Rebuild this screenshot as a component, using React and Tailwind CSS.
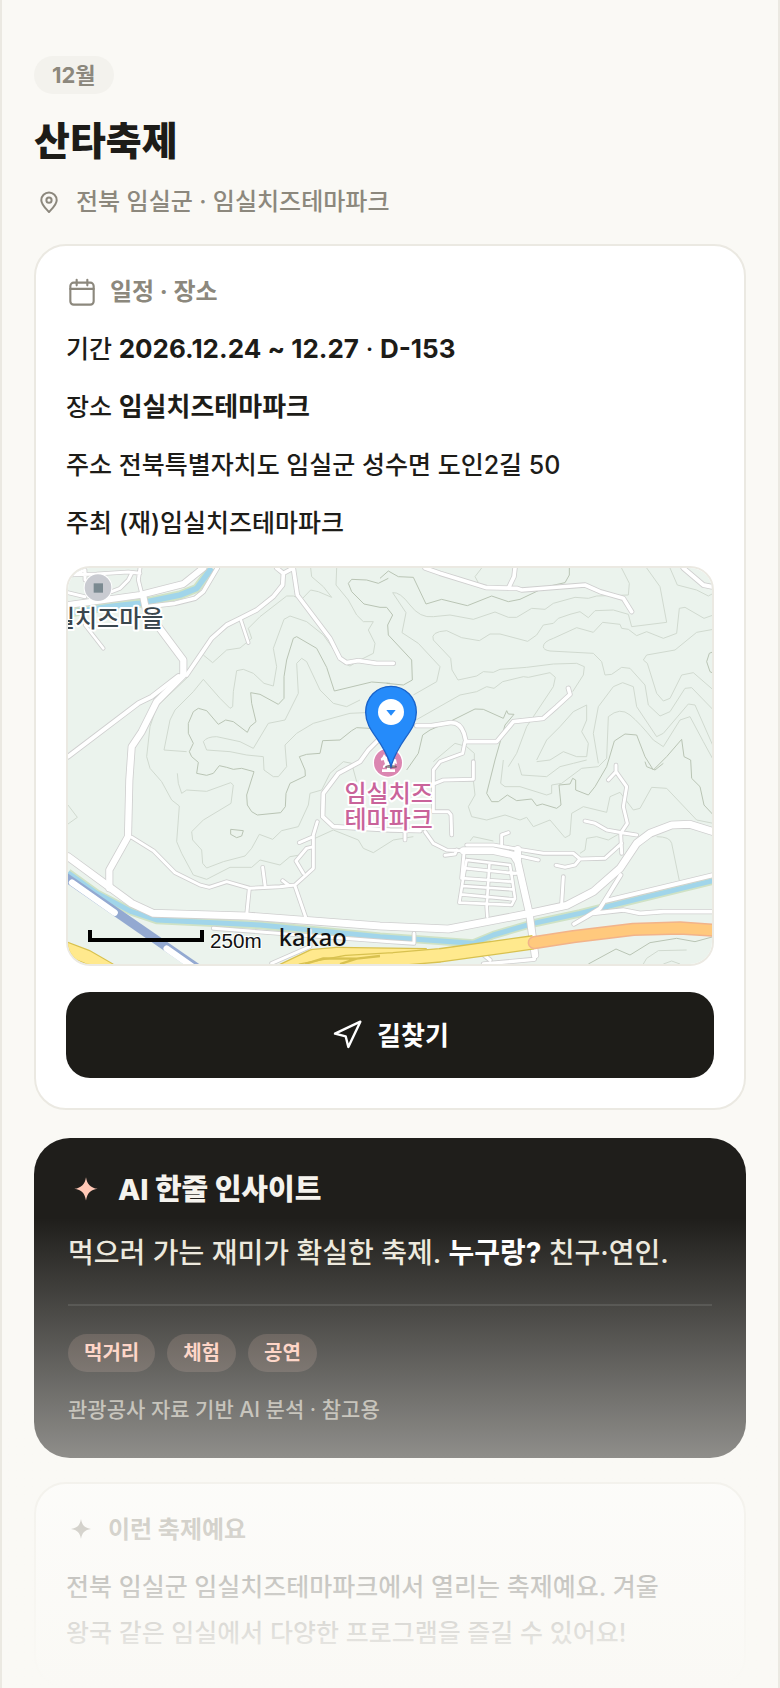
import { Navigation } from 'lucide-react';

const festival = {
  month: '12월',
  name: '산타축제',
  region: '전북 임실군 · 임실치즈테마파크',
  start: '2026.12.24 ~ 12.27',
  dday: 'D-153',
  place: '임실치즈테마파크',
  address: '전북특별자치도 임실군 성수면 도인2길 50',
  host: '(재)임실치즈테마파크',
  tags: ['먹거리', '체험', '공연'],
};

// contour lines, light and dark, drawn under the roads
const contours = [
  'M430 285L458 308L500 270L540 264L575 235L565 205L600 170L680 108L700 108L725 118L752 90L775 95L815 112',
  'M752 24L755 50L790 80L815 112',
  'M830 24L828 75L865 120L890 165L910 185L940 185L925 210L945 250L940 280L900 300L870 318L850 310L815 260L790 225L740 185L690 168L672 178L640 265L650 320L640 378L612 370L580 340L550 328L530 332L520 395L518 440L510 445L480 415L430 358L400 395L345 450L330 480L312 570L380 575',
  'M352 640L355 670L365 700L380 690L440 694L512 668L520 675L513 730L430 780L395 815L398 840L425 870L428 910L440 924L490 905L555 888L575 865L598 823L638 838L665 812L715 800L745 735L750 700L785 690L810 640L850 605L875 610L890 665',
  'M430 545Q440 530 470 530L540 545L580 565L625 490L675 480L715 400L710 310L725 295L740 305L780 390L820 430L860 440L900 420',
  'M430 545L440 570L510 575L560 585L610 590L612 630L640 650L655 650L680 620L675 555L710 520L760 490L870 460L915 458',
  'M385 350L290 440L270 500L260 590L270 625L305 665L335 720L358 738L350 845L365 880L400 945L440 958L510 922L575 922L600 900L660 915L690 890L720 885',
  'M24 735L52 772L24 792',
  'M765 835L820 810L895 840L910 865L940 878L1000 840L1060 830',
];

const contoursRight = [
  'M38 98Q60 95 90 135T160 170L210 165L280 178L345 156L385 172L410 172L455 145L495 148L520 130L585 112L625 115L650 108L745 105L748 70L720 15',
  'M38 98L78 158L66 218L115 250L180 320L170 365L100 405',
  'M160 240Q150 215 200 212L245 233L298 242L330 222L360 222L443 244L470 225L490 195L520 190L535 175L570 163L600 155L625 173L645 152L700 150L745 163L755 200L860 187L840 80L800 24',
  'M160 240L212 295L216 330L234 360L290 348L310 335L340 337L360 328L440 322L520 312L590 310L613 320L610 345L578 395',
  'M490 260Q490 245 520 235L590 203L640 217L668 187L720 193L725 205L745 208L770 227L800 215L850 235L890 220L898 145L915 142L972 175L1000 165',
  'M490 260Q490 270 510 273L640 280L665 305L675 345L695 343L725 322L750 325L795 375L805 435L840 468L870 455L915 385L935 383L1000 450',
  'M1000 208L950 217L885 270L800 285L790 300L802 310L830 400L850 423L870 415L905 345L940 338L1000 390',
  'M108 480L240 405L290 395L320 380L342 385L368 365L430 350L445 352L510 338L526 352L520 380L440 500L410 580L385 620',
  'M655 610L640 520L655 440L700 380L728 368L760 380L770 440L830 530L850 520L925 432L945 435L1000 560',
  'M470 600L500 540L540 500L580 455L620 435L620 480L605 515L625 550L620 590L590 590L550 575L510 600L470 605',
  'M685 470Q720 440 750 465T820 540L850 560L900 480L930 470L970 545L1000 600',
  'M285 50L305 24M285 50L295 68M870 24L892 75L950 90L985 108L1000 100',
  'M370 600L362 670L375 680L420 680L500 705L515 700L515 675L545 670L605 625L655 620L680 595L685 470',
  'M415 610L425 645L500 650L540 620L580 610L620 600',
  'M280 660L285 705L265 740L275 770L320 780L375 765L420 780L440 772L460 800L510 780L555 833L570 825L575 760L610 740L680 757L690 710L720 697L760 750L780 745L815 682L860 685L950 780L1000 790',
  'M270 843L280 830L340 843M600 880L615 870L620 835L650 830L685 840L720 820M830 830Q870 830 875 850L898 962',
  'M160 605L225 550L260 560L283 580L283 640',
  'M790 1212L800 1195L835 1172L920 1170M850 1212L875 1203L900 1212',
];

const darkContours = [
  'M990 370L935 366L823 393L800 322L770 265L710 230L700 235L680 300L672 350L672 415L655 433L600 403L572 398L575 430L588 485L570 500L562 517L520 485L497 480L475 493L440 452L415 445L400 455L385 490L385 520L400 550L388 575L395 590L415 607L410 640L440 646L460 640L478 617L500 622L520 628L545 625L582 635L560 705L562 735L575 755L592 765L662 758L676 740L678 700L690 670L736 648L735 630L718 590L740 583L780 580L788 542L840 540L875 512L890 503L930 505',
  'M985 55L955 70L920 60L875 58L865 70L875 95L912 132L960 142L980 142L998 165L983 195L985 225L1055 300L1057 360L1030 375L980 370',
  'M512 808L550 812L545 828L530 833L512 823Z',
];

const darkContoursRight = [
  'M0 55L25 33L55 50L100 52L138 132L185 118L262 137L335 108L385 125L420 118L500 80L555 68L568 45L568 24',
  'M80 630L115 580L128 525L150 510L215 482L285 447L310 448L370 475L380 452L385 462L402 463L375 495L345 600L320 700L335 725L355 725L382 705L410 722L455 717L470 737L487 732L530 745L543 735L537 675L570 672L578 655L587 660L587 690L625 705L645 680L680 620L703 543L735 522L770 525L795 590L820 630L860 590L905 538L912 590L932 600L935 655L960 680L972 735L1000 765',
  'M1000 275L988 280L980 305L990 335L1000 340M795 605L800 620L825 630L850 610',
  'M625 1212L708 1167L750 1185L810 1148L890 1135L945 1145L1000 1130',
];

// [path, width]
const roads = [
  ['M24 590L235 430L275 410L355 348', 12],
  ['M24 98L75 110M24 50L75 30L75 60M24 45L110 42L205 36L240 40M215 40L205 60L180 85L155 95M240 24L235 60L250 120', 9],
  ['M24 135L240 105L370 72L430 24', 18],
  ['M250 120L262 140L345 130L405 115L430 95L472 24', 11],
  ['M250 110L258 150L370 300L370 345L290 425L245 515L215 560L208 660L204 830L148 930L148 985', 19],
  ['M380 345L455 235L500 195L540 175L590 150L640 110L668 75L670 40L650 24M670 40L700 24L712 105L810 235L840 295L860 308L895 302L950 310L1000 310', 11],
  ['M542 178L565 248M75 195L130 265', 8],
  ['M215 832L280 872L345 938L420 975L448 982L500 965L570 985L660 980L705 975L760 925L760 825L772 785M718 848L760 830M760 860L740 865L708 903L730 940M608 922L615 975M668 962L685 975M568 985L560 1065M705 978L740 1080', 9],
  ['M24 890L215 1030L280 1060L560 1068L960 1098L1165 1107L1400 1062L1520 1036L1600 995L1680 925L1730 850L1770 820L1835 795L1890 793L1960 815', 21],
  ['M460 1105L720 1125L990 1145L1062 1150L1062 1120M750 1110L750 1160L635 1210', 9],
  ['M955 540L925 570L900 605L835 640L790 700L788 770L820 800L990 810L1080 812', 11],
  ['M1095 815L1120 850L1160 870L1210 872M1035 815L1035 840M1155 886L1185 882L1190 870', 9],
  ['M1070 497L1115 497L1170 488Q1200 485 1212 520L1218 545L1310 545L1360 485L1450 475L1490 440L1530 403L1525 385', 11],
  ['M1215 545L1208 580L1140 605L1120 630L1120 755L1165 755L1173 765L1175 825M1120 672L1150 660L1240 658L1240 605', 9],
  ['M1095 24L1140 40L1280 83L1370 85L1385 90L1575 75L1620 95L1690 115L1715 155M1345 85L1362 50L1365 24', 11],
  ['M1870 24L1930 75L1955 80', 12],
  ['M1668 615L1668 635L1700 680L1690 740L1702 790L1682 820L1685 880M1668 635L1645 660M1575 783L1605 790L1640 810L1685 818L1730 825M1685 850L1635 895L1560 897L1540 880L1450 880L1370 867L1300 855L1220 855M1560 897L1545 915L1515 922L1488 916', 9],
  ['M1325 853L1325 825L1345 818M1510 950L1505 1030M1380 888L1435 900M1212 880L1205 955M1350 938L1370 940', 9],
  ['M1220 900L1350 915L1365 1015L1355 1035L1198 1028L1212 940L1220 900M1220 925L1365 940M1215 955L1355 965M1208 978L1355 988M1203 1003L1360 1018M1288 915L1280 1040L1282 1070', 8],
  ['M1210 872L1300 872L1360 885L1373 905L1408 1060L1425 1185M1373 868L1373 900', 20],
  ['M1682 945L1620 1045L1580 1070L1542 1092M1600 1060L1690 1050L1740 1060L1810 1055L1960 1055', 11],
  ['M1640 1022L1960 945', 12],
  ['M1423 1150L1423 1198L1270 1212M1272 1185L1290 1200', 10],
];

const rivers = [
  ['M24 160L80 150L150 140L240 130L360 105L410 85L455 24', 17],
  ['M24 938L110 1000L215 1055L290 1080L600 1095L960 1130L1240 1150L1300 1125L1420 1090L1560 1060L1680 1030L1960 962', 15],
];

function FestivalMap() {
  return (
    <svg
      viewBox="24 24 1932 1188"
      className="block w-full"
      role="img"
      aria-label="임실치즈테마파크 지도"
    >
      <rect x="0" y="0" width="1980" height="1240" fill="#ebf3ed" />

      <g fill="none" strokeLinejoin="round" strokeWidth="3">
        <g stroke="#d0d9cf">
          {contours.map((d) => <path key={d} d={d} />)}
        </g>
        <g stroke="#b9c4b4">
          {darkContours.map((d) => <path key={d} d={d} />)}
        </g>
        <g stroke="#d0d9cf" transform="translate(960 0)">
          {contoursRight.map((d) => <path key={d} d={d} />)}
        </g>
        <g stroke="#b9c4b4" transform="translate(960 0)">
          {darkContoursRight.map((d) => <path key={d} d={d} />)}
        </g>
      </g>

      {/* rivers */}
      <g fill="none" strokeLinejoin="round">
        {rivers.map(([d, w]) => <path key={d} d={d} stroke="#cfe2c5" strokeWidth={w + 10} />)}
        {rivers.map(([d, w]) => <path key={d} d={d} stroke="#a1d5ea" strokeWidth={w} />)}
      </g>

      {/* railway */}
      <g fill="none">
        <path d="M0 940L420 1230" stroke="#93a9d1" strokeWidth="27" />
        <path d="M36 968L164 1058M320 1166L400 1222" stroke="#fff" strokeWidth="19" strokeLinecap="round" />
      </g>

      {/* roads */}
      <g fill="none" stroke="#cfcfcf" strokeLinecap="round" strokeLinejoin="round">
        {roads.map(([d, w]) => <path key={d} d={d} strokeWidth={w + 5} />)}
      </g>
      <g fill="none" stroke="#fff" strokeLinecap="round" strokeLinejoin="round">
        {roads.map(([d, w]) => <path key={d} d={d} strokeWidth={w} />)}
      </g>

      {/* national roads */}
      <g fill="none" strokeLinejoin="round">
        <path d="M0 1160L80 1190L150 1230" stroke="#d8c14f" strokeWidth="44" />
        <path d="M0 1160L80 1190L150 1230" stroke="#ffe98d" strokeWidth="37" />
        <path d="M650 1240L760 1188L830 1182L1100 1186" stroke="#d8c14f" strokeWidth="44" />
        <path d="M650 1240L760 1188L830 1182L1100 1186" stroke="#ffe98d" strokeWidth="36" />
        <path d="M720 1232L860 1206L1000 1198L1140 1186L1420 1147" stroke="#d8c14f" strokeWidth="44" />
        <path d="M720 1232L860 1206L1000 1198L1140 1186L1420 1147" stroke="#ffe98d" strokeWidth="36" />
        <path d="M735 1212L790 1195L890 1196L960 1188M840 1212L890 1196" stroke="#d8c14f" strokeWidth="7" />
        <path d="M1423 1148L1540 1130L1720 1108L1860 1104L1980 1112" stroke="#f2b38a" strokeWidth="40" strokeLinecap="round" />
        <path d="M1423 1148L1540 1130L1720 1108L1860 1104L1980 1112" stroke="#ffc97d" strokeWidth="31" strokeLinecap="round" />
      </g>

      {/* cheese village */}
      <circle cx="114" cy="83" r="43" fill="#fff" />
      <circle cx="114" cy="83" r="40" fill="#c9cbd1" />
      <rect x="101" y="70" width="28" height="28" fill="#7b8a91" />
      <text
        x="310" y="202" textAnchor="end" fontSize="72" fontWeight="500" fill="#3a464d"
        stroke="#fff" strokeWidth="12" strokeLinejoin="round" paintOrder="stroke"
      >
        임실치즈마을
      </text>

      {/* theme park */}
      <circle cx="984" cy="608" r="46" fill="#fff" />
      <circle cx="984" cy="608" r="42" fill="#db86b1" />
      <path
        d="M972 582L976 588L981 592L983 604L994 607L1000 597L1008 598L1011 612L1004 610L1004 622L998 622L994 615L984 616L976 622L969 624L969 618L975 612L971 600L964 602L962 596L968 590ZM981 618H990V628H1005V636H966V628H981Z"
        fill="#fff"
      />
      <g
        fontSize="72" fontWeight="500" fill="#c9639a" stroke="#fff" strokeWidth="12"
        strokeLinejoin="round" paintOrder="stroke" textAnchor="middle"
      >
        <text x="986" y="726">임실치즈</text>
        <text x="986" y="805">테마파크</text>
      </g>

      {/* marker */}
      <ellipse cx="993" cy="620" rx="18" ry="5" fill="#333" opacity=".55" />
      <path
        d="M993 379C950 379 917 413 917 457C917 515 972 540 993 620C1014 540 1069 515 1069 457C1069 413 1036 379 993 379Z"
        fill="#258bfa" stroke="#1a63c9" strokeWidth="4"
      />
      <circle cx="993" cy="456" r="39" fill="#fff" />
      <path d="M979 450H1007L993 467Z" fill="#258bfa" />

      {/* scale bar */}
      <path d="M90 1110V1140H426V1110" fill="none" stroke="#000" strokeWidth="12" />
      <text x="450" y="1163" fontSize="62" fill="#111" stroke="#fff" strokeWidth="6" paintOrder="stroke" className="font-['Liberation_Sans',sans-serif] font-normal">250m</text>
      <text x="656" y="1157" fontSize="71" fill="#111" className="font-['Noto_Sans',sans-serif] font-medium">kakao</text>
    </svg>
  );
}

function PinIcon() {
  return (
    <svg viewBox="0 0 24 24" fill="none" stroke="currentColor" strokeWidth="2" strokeLinejoin="round" className="mx-[3px] size-6 shrink-0" aria-hidden="true">
      <path d="M12 22C9 18.7 4.3 14.6 4.3 10.2a7.7 7.7 0 0 1 15.4 0C19.7 14.6 15 18.7 12 22Z" />
      <circle cx="12" cy="10.2" r="2.6" />
    </svg>
  );
}

function CalendarIcon() {
  return (
    <svg viewBox="0 0 24 24" fill="none" stroke="currentColor" strokeWidth="1.6" strokeLinecap="round" className="size-8 shrink-0" aria-hidden="true">
      <rect x="3.25" y="5" width="17.5" height="16.5" rx="2.5" />
      <path d="M3.25 9.7H20.75M8 2.8V7M16 2.8V7" />
    </svg>
  );
}

function Sparkle({ className }) {
  return (
    <svg viewBox="0 1 24 24" fill="currentColor" className={className} aria-hidden="true">
      <path d="M12 2C13 8.2 15.8 11 22 12C15.8 13 13 15.8 12 22C11 15.8 8.2 13 2 12C8.2 11 11 8.2 12 2Z" />
    </svg>
  );
}

export default function App() {
  return (
    <main className="relative min-h-screen overflow-hidden border-x-2 border-[#ebe9e2] bg-[#faf9f5] px-8 pt-14 font-['Inter','Noto_Sans_CJK_KR',sans-serif] font-medium text-[#1d1c18]">
      <header>
        <span className="flex h-[38px] w-fit items-center rounded-full bg-[#f3f2ed] px-[18px] text-[22px] font-bold text-[#8c887d]">
          {festival.month}
        </span>
        <h1 className="mt-5 text-[39px] leading-[54px] font-extrabold">{festival.name}</h1>
        <p className="mt-4 flex items-center gap-3 text-2xl leading-9 text-[#8c887d]">
          <PinIcon />
          {festival.region}
        </p>
      </header>

      <section className="mt-6 rounded-[32px] border-2 border-[#ebe9e2] bg-white p-[30px]">
        <h2 className="flex items-center gap-3 text-2xl leading-8 font-bold text-[#8c887d]">
          <CalendarIcon />
          일정 · 장소
        </h2>
        <div className="mt-[18px] flex flex-col gap-3 text-[25px] leading-[46px]">
          <p>기간 <b className="text-[26px]">{festival.start}</b> · <b className="text-[26px]">{festival.dday}</b></p>
          <p>장소 <b className="text-[26px]">{festival.place}</b></p>
          <p>주소 {festival.address}</p>
          <p>주최 {festival.host}</p>
        </div>
        <div className="mt-5 overflow-hidden rounded-3xl border-2 border-[#ebe9e2]">
          <FestivalMap />
        </div>
        <button
          type="button"
          className="mt-[26px] flex h-[86px] w-full items-center justify-center gap-[14px] rounded-3xl bg-[#1d1c18] text-[26px] font-bold text-white"
        >
          <Navigation size={32} strokeWidth={1.8} />
          길찾기
        </button>
      </section>

      <section className="mt-7 rounded-[36px] bg-[#1f1e1b] p-[34px]">
        <h2 className="flex items-center gap-[14px] text-[29px] leading-9 font-extrabold text-[#f5f3ee]">
          <Sparkle className="mx-1 size-7 text-[#ffc8b6]" />
          AI 한줄 인사이트
        </h2>
        <p className="mt-[22px] text-[28px] leading-[46px] text-[#ece8dc]">
          먹으러 가는 재미가 확실한 축제. <b className="text-white">누구랑?</b> 친구·연인.
        </p>
        <ul className="mt-7 flex gap-3 border-t-2 border-white/10 pt-7">
          {festival.tags.map((tag) => (
            <li key={tag} className="flex h-[38px] items-center rounded-full bg-[#ffc8b6]/15 px-4 text-xl font-bold text-[#ffc8b6]">
              {tag}
            </li>
          ))}
        </ul>
        <p className="mt-6 text-[21px] leading-7 text-[#a5a196]">관광공사 자료 기반 AI 분석 · 참고용</p>
      </section>

      <section className="mt-6 rounded-[32px] border-2 border-[#ebe9e2] bg-white p-[30px]">
        <h2 className="flex items-center gap-3 text-2xl leading-8 font-bold text-[#8c887d]">
          <Sparkle className="mx-[3px] size-6" />
          이런 축제예요
        </h2>
        <p className="mt-[18px] text-[25px] leading-[46px]">
          전북 임실군 임실치즈테마파크에서 열리는 축제예요. 겨울
          <br />
          왕국 같은 임실에서 다양한 프로그램을 즐길 수 있어요!
        </p>
      </section>

      {/* fade out over the last part of the page */}
      <div className="pointer-events-none absolute -inset-x-[2px] bottom-0 h-[470px] bg-linear-to-b from-[#faf9f5]/0 to-[#faf9f5]" />
    </main>
  );
}
